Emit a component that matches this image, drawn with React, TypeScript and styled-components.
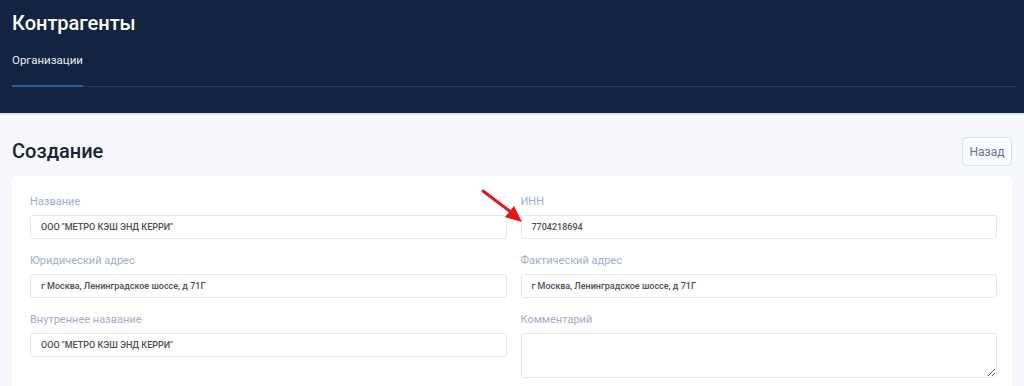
import React from "react";
import styled, { createGlobalStyle } from "styled-components";

const Global = createGlobalStyle`
  * { box-sizing: border-box; }
  html, body { margin: 0; padding: 0; }
  body {
    background: #f7f8fb;
    font-family: Roboto, "Noto Sans", sans-serif;
    color: #1d2638;
  }
`;

const Page = styled.div`
  position: relative;
  width: 1024px;
  height: 386px;
  overflow: hidden;
  background: #f7f8fb;
`;

const Header = styled.header`
  background: #12243f;
  height: 115px;
  padding: 9px 7px 0 12px;
  border-bottom: 2px solid #dfe5ee;
  display: flex;
  flex-direction: column;
`;

const PageTitle = styled.h1`
  margin: 0;
  font-size: 20px;
  line-height: 28px;
  font-weight: 500;
  color: #ffffff;
`;

const TabBar = styled.nav`
  display: flex;
  margin-top: 15px;
  border-bottom: 1px solid #243859;
`;

const Tab = styled.div<{ $active?: boolean }>`
  font-size: 11.5px;
  line-height: 16px;
  color: #e8edf5;
  padding-bottom: 17px;
  margin-bottom: -1px;
  border-bottom: 2px solid ${(p) => (p.$active ? "#2d5d9f" : "transparent")};
`;

const Main = styled.main`
  padding: 22px 12px 0 12px;
`;

const TopRow = styled.div`
  display: flex;
  justify-content: space-between;
  align-items: center;
  height: 29px;
  margin-bottom: 10px;
`;

const SectionTitle = styled.h2`
  margin: 0;
  font-size: 20px;
  line-height: 29px;
  font-weight: 500;
  color: #1b2434;
`;

const BackButton = styled.button`
  height: 29px;
  width: 50px;
  padding: 0;
  border: 1px solid #d3e2f4;
  border-radius: 4px;
  background: #f9fbfd;
  font-family: Roboto, "Noto Sans", sans-serif;
  font-size: 12px;
  font-weight: 400;
  color: #66758d;
`;

const Card = styled.section`
  background: #ffffff;
  border-radius: 6px;
  padding: 18px 15px 20px 18px;
  display: grid;
  grid-template-columns: 1fr 1fr;
  column-gap: 14px;
  row-gap: 14px;
`;

const Field = styled.label`
  display: flex;
  flex-direction: column;
`;

const Label = styled.span`
  font-size: 11px;
  line-height: 15px;
  color: #a0aecb;
  margin-bottom: 6px;
`;

const Input = styled.input`
  height: 24px;
  border: 1px solid #e4e8ee;
  border-radius: 3px;
  padding: 0 10px;
  font-family: Roboto, "Noto Sans", sans-serif;
  font-size: 9px;
  font-weight: 500;
  color: #4a4f58;
  background: #ffffff;
  outline: none;
`;

const TextArea = styled.textarea`
  height: 45px;
  border: 1px solid #e4e8ee;
  border-radius: 3px;
  padding: 6px 10px;
  font-family: Roboto, "Noto Sans", sans-serif;
  font-size: 9px;
  background: #ffffff;
  outline: none;
  resize: vertical;
`;

const Arrow = styled.svg`
  position: absolute;
  left: 478px;
  top: 186px;
`;

const fields: { label: string; value?: string; multiline?: boolean }[] = [
  { label: "Название", value: 'ООО "МЕТРО КЭШ ЭНД КЕРРИ"' },
  { label: "ИНН", value: "7704218694" },
  { label: "Юридический адрес", value: "г Москва, Ленинградское шоссе, д 71Г" },
  { label: "Фактический адрес", value: "г Москва, Ленинградское шоссе, д 71Г" },
  { label: "Внутреннее название", value: 'ООО "МЕТРО КЭШ ЭНД КЕРРИ"' },
  { label: "Комментарий", multiline: true },
];

export default function App() {
  return (
    <Page>
      <Global />
      <Header>
        <PageTitle>Контрагенты</PageTitle>
        <TabBar>
          <Tab $active>Организации</Tab>
        </TabBar>
      </Header>
      <Main>
        <TopRow>
          <SectionTitle>Создание</SectionTitle>
          <BackButton>Назад</BackButton>
        </TopRow>
        <Card>
          {fields.map((f) => (
            <Field key={f.label}>
              <Label>{f.label}</Label>
              {f.multiline ? (
                <TextArea />
              ) : (
                <Input defaultValue={f.value} readOnly />
              )}
            </Field>
          ))}
        </Card>
      </Main>
      <Arrow width="48" height="40" viewBox="0 0 48 40">
        <line x1="5" y1="5" x2="34" y2="27" stroke="#e8141b" strokeWidth="3" strokeLinecap="round" />
        <polygon points="44,36 27,31 36,20" fill="#e8141b" />
      </Arrow>
    </Page>
  );
}
